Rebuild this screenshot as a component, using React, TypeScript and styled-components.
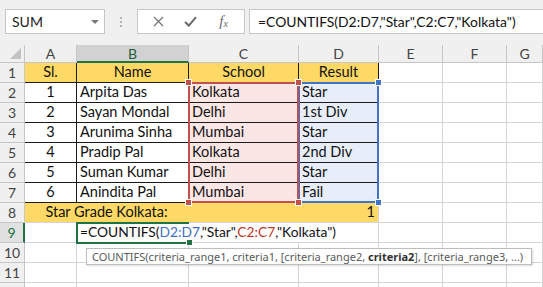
import { Fragment } from 'react';
import styled, { createGlobalStyle, css } from 'styled-components';

const GlobalStyle = createGlobalStyle`
  html, body {
    margin: 0;
    padding: 0;
    width: 543px;
    height: 287px;
    overflow: hidden;
    background: #ffffff;
    font-family: Lato, "Noto Sans", sans-serif;
  }
`;

const GRID_LINE = '#d4d4d4';
const HEAD_LINE = '#c6c6c6';
const TABLE_LINE = '#1a1a1a';
const YELLOW = '#ffd966';
const GREEN = '#217346';
const PINK = '#fbe6e6';
const BLUE = '#e7eef9';

// Toolbar with name box and formula bar
const Toolbar = styled.div`
  display: flex;
  align-items: center;
  height: 45px;
  padding: 0 0 2px 5px;
  box-sizing: border-box;
  background: #f0f0f0;
`;

const NameBox = styled.div`
  display: flex;
  align-items: center;
  justify-content: space-between;
  width: 100px;
  height: 25px;
  box-sizing: border-box;
  padding: 0 5px 0 6px;
  background: #ffffff;
  border: 1px solid ${HEAD_LINE};
  font-size: 14px;
  color: #222;
`;

const DropArrow = styled.span`
  width: 0;
  height: 0;
  border-left: 4px solid transparent;
  border-right: 4px solid transparent;
  border-top: 4px solid #7a7a7a;
`;

const Dots = styled.div`
  display: flex;
  flex-direction: column;
  gap: 2px;
  margin: 0 15px;

  span {
    width: 2px;
    height: 2px;
    background: #b4b4b4;
  }
`;

const IconBox = styled.div`
  display: flex;
  align-items: center;
  justify-content: space-around;
  width: 108px;
  height: 25px;
  box-sizing: border-box;
  padding: 0 4px;
  background: #ffffff;
  border: 1px solid ${HEAD_LINE};
`;

const IconBtn = styled.span`
  display: flex;
  align-items: center;
  justify-content: center;
  width: 24px;
  height: 22px;
`;

const FxText = styled.span`
  font-family: "Liberation Serif", serif;
  font-style: italic;
  font-size: 15px;
  color: #6a6a6a;

  sub {
    font-size: 10px;
    vertical-align: -1px;
  }
`;

const FormulaInput = styled.div`
  flex: 1;
  display: flex;
  align-items: center;
  height: 25px;
  margin-left: 4px;
  padding-left: 8px;
  box-sizing: border-box;
  background: #ffffff;
  border: 1px solid ${HEAD_LINE};
  border-right: none;
  font-size: 13.9px;
  color: #111;
  white-space: nowrap;
`;

// Sheet grid
const SheetWrap = styled.div`
  position: relative;
`;

const gridTemplate = css`
  display: grid;
  grid-template-columns: 25px 52px 112px 110px 80px 64px 64px 1fr;
  grid-template-rows: 18px repeat(12, 20px);
`;

const Sheet = styled.div`
  ${gridTemplate}
`;

// Same grid, laid over the sheet for range marks and the active cell
const MarkLayer = styled.div`
  ${gridTemplate}
  position: absolute;
  inset: 0;
  pointer-events: none;
`;

const Corner = styled.div`
  position: relative;
  background: #f0f0f0;
  border-right: 1px solid ${HEAD_LINE};
  border-bottom: 1px solid ${HEAD_LINE};

  &::after {
    content: '';
    position: absolute;
    right: 3px;
    bottom: 3px;
    border-left: 11px solid transparent;
    border-bottom: 11px solid #c2c2c2;
  }
`;

const ColHead = styled.div<{ $active?: boolean }>`
  display: flex;
  align-items: center;
  justify-content: center;
  box-sizing: border-box;
  background: ${(p) => (p.$active ? '#d2d2d2' : '#f0f0f0')};
  border-right: 1px solid ${HEAD_LINE};
  border-bottom: ${(p) => (p.$active ? `2px solid ${GREEN}` : `1px solid ${HEAD_LINE}`)};
  font-size: 14px;
  color: ${(p) => (p.$active ? '#1e5b38' : '#444')};
  padding-top: ${(p) => (p.$active ? '1px' : '0')};
`;

const RowHead = styled.div<{ $active?: boolean }>`
  display: flex;
  align-items: center;
  justify-content: center;
  box-sizing: border-box;
  background: ${(p) => (p.$active ? '#e1e1e1' : '#f0f0f0')};
  border-right: ${(p) => (p.$active ? `2px solid ${GREEN}` : `1px solid ${HEAD_LINE}`)};
  border-bottom: 1px solid ${HEAD_LINE};
  font-size: 14px;
  color: ${(p) => (p.$active ? GREEN : '#444')};
`;

type Align = 'left' | 'center' | 'right';

const Cell = styled.div<{
  $align?: Align;
  $fill?: string;
  $table?: boolean;
  $noRight?: boolean;
  $span?: number;
}>`
  display: flex;
  align-items: flex-end;
  box-sizing: border-box;
  padding: 0 3px 2px 3px;
  font-size: 14.5px;
  line-height: 17px;
  color: #111;
  white-space: nowrap;
  background: ${(p) => p.$fill || 'transparent'};
  justify-content: ${(p) =>
    p.$align === 'center' ? 'center' : p.$align === 'right' ? 'flex-end' : 'flex-start'};
  border-right: 1px solid ${(p) => (p.$table ? TABLE_LINE : GRID_LINE)};
  border-bottom: 1px solid ${(p) => (p.$table ? TABLE_LINE : GRID_LINE)};
  ${(p) =>
    p.$noRight &&
    css`
      border-right-color: transparent;
    `}
  ${(p) =>
    p.$span &&
    css`
      grid-column: span ${p.$span};
    `}
`;

const Overflow = styled.span`
  position: relative;
  z-index: 1;
  font-size: 13.8px;
`;

const RefD = styled.span`
  color: #3c6fc4;
`;

const RefC = styled.span`
  color: #c0392b;
`;

// Range highlight placed over its grid cells
const RangeBox = styled.div<{ $color: string; $col: number; $layer: number }>`
  position: relative;
  grid-column: ${(p) => p.$col} / ${(p) => p.$col + 1};
  grid-row: 3 / 9;
  margin: -1px 0 0 -1px;
  border: 2px solid ${(p) => p.$color};
  z-index: ${(p) => p.$layer};
`;

const Handle = styled.span<{ $color: string; $top?: boolean; $left?: boolean }>`
  position: absolute;
  width: 5px;
  height: 5px;
  background: ${(p) => p.$color};
  border: 1px solid #ffffff;
  ${(p) => (p.$top ? 'top: -5px;' : 'bottom: -5px;')}
  ${(p) => (p.$left ? 'left: -5px;' : 'right: -5px;')}
`;

const ActiveCell = styled.div`
  position: relative;
  grid-column: 3 / 4;
  grid-row: 10 / 11;
  margin: -1px 0 -1px -1px;
  border: 2px solid ${GREEN};
  border-right: none;
  z-index: 2;

  &::after {
    content: '';
    position: absolute;
    right: -4px;
    bottom: -4px;
    width: 5px;
    height: 5px;
    background: ${GREEN};
    border: 1px solid #ffffff;
  }
`;

const Tooltip = styled.div`
  position: absolute;
  left: 86px;
  top: 203px;
  z-index: 5;
  width: 446px;
  height: 17px;
  box-sizing: border-box;
  padding: 0 5px;
  display: flex;
  align-items: center;
  background: #ffffff;
  border: 1px solid #bdbdbd;
  box-shadow: 1px 1px 2px rgba(0, 0, 0, 0.15);
  font-family: "Noto Sans", "Open Sans", sans-serif;
  font-size: 11px;
  color: #5a5a5a;
  white-space: nowrap;

  b {
    color: #333;
  }
`;

const COLUMNS = ['A', 'B', 'C', 'D', 'E', 'F', 'G'];

const ROWS = [
  { sl: '1', name: 'Arpita Das', school: 'Kolkata', result: 'Star' },
  { sl: '2', name: 'Sayan Mondal', school: 'Delhi', result: '1st Div' },
  { sl: '3', name: 'Arunima Sinha', school: 'Mumbai', result: 'Star' },
  { sl: '4', name: 'Pradip Pal', school: 'Kolkata', result: '2nd Div' },
  { sl: '5', name: 'Suman Kumar', school: 'Delhi', result: 'Star' },
  { sl: '6', name: 'Anindita Pal', school: 'Mumbai', result: 'Fail' },
];

const EmptyTail = ({ count }: { count: number }) => (
  <>
    {Array.from({ length: count }).map((_, i) => (
      <Cell key={i} />
    ))}
  </>
);

const RangeMark = ({ color, col, layer }: { color: string; col: number; layer: number }) => (
  <RangeBox $color={color} $col={col} $layer={layer}>
    <Handle $color={color} $top $left />
    <Handle $color={color} $top />
    <Handle $color={color} $left />
    <Handle $color={color} />
  </RangeBox>
);

const App = () => {
  return (
    <>
      <GlobalStyle />
      <Toolbar>
        <NameBox>
          SUM
          <DropArrow />
        </NameBox>
        <Dots>
          <span />
          <span />
          <span />
        </Dots>
        <IconBox>
          <IconBtn>
            <svg width="11" height="11" viewBox="0 0 11 11">
              <path d="M1 1 L10 10 M10 1 L1 10" stroke="#767676" strokeWidth="1.3" />
            </svg>
          </IconBtn>
          <IconBtn>
            <svg width="13" height="11" viewBox="0 0 13 11">
              <path d="M1 6 L4.8 9.6 L12 1.2" stroke="#6a6a6a" strokeWidth="2" fill="none" />
            </svg>
          </IconBtn>
          <IconBtn>
            <FxText>
              f<sub>x</sub>
            </FxText>
          </IconBtn>
        </IconBox>
        <FormulaInput>=COUNTIFS(D2:D7,"Star",C2:C7,"Kolkata")</FormulaInput>
      </Toolbar>

      <SheetWrap>
        <Sheet>
          {/* Column headers */}
          <Corner />
          {COLUMNS.map((c) => (
            <ColHead key={c} $active={c === 'B'}>
              {c}
            </ColHead>
          ))}

          {/* Row 1: table header */}
          <RowHead>1</RowHead>
          <Cell $align="center" $fill={YELLOW} $table>Sl.</Cell>
          <Cell $align="center" $fill={YELLOW} $table>Name</Cell>
          <Cell $align="center" $fill={YELLOW} $table>School</Cell>
          <Cell $align="center" $fill={YELLOW} $table>Result</Cell>
          <EmptyTail count={3} />

          {/* Rows 2-7: data */}
          {ROWS.map((r, i) => (
            <Fragment key={r.sl}>
              <RowHead>{i + 2}</RowHead>
              <Cell $align="center" $table>{r.sl}</Cell>
              <Cell $table>{r.name}</Cell>
              <Cell $table $fill={PINK}>{r.school}</Cell>
              <Cell $table $fill={BLUE}>{r.result}</Cell>
              <EmptyTail count={3} />
            </Fragment>
          ))}

          {/* Row 8: result */}
          <RowHead>8</RowHead>
          <Cell $span={2} $align="center" $fill={YELLOW} $noRight>
            Star Grade Kolkata:
          </Cell>
          <Cell $fill={YELLOW} $noRight />
          <Cell $align="right" $fill={YELLOW}>1</Cell>
          <EmptyTail count={3} />

          {/* Row 9: formula being edited */}
          <RowHead $active>9</RowHead>
          <Cell />
          <Cell $noRight>
            <Overflow>
              =COUNTIFS(<RefD>D2:D7</RefD>,"Star",<RefC>C2:C7</RefC>,"Kolkata")
            </Overflow>
          </Cell>
          <Cell $noRight />
          <Cell />
          <EmptyTail count={3} />

          {[10, 11].map((n) => (
            <Fragment key={n}>
              <RowHead>{n}</RowHead>
              <EmptyTail count={7} />
            </Fragment>
          ))}
          <RowHead />
          <EmptyTail count={7} />
        </Sheet>

        <MarkLayer>
          <RangeMark color="#4472c4" col={5} layer={3} />
          <RangeMark color="#c0504d" col={4} layer={4} />
          <ActiveCell />
        </MarkLayer>

        <Tooltip>
          COUNTIFS(criteria_range1, criteria1, [criteria_range2,&nbsp;<b>criteria2</b>], [criteria_range3, ...)
        </Tooltip>
      </SheetWrap>
    </>
  );
};

export default App;
